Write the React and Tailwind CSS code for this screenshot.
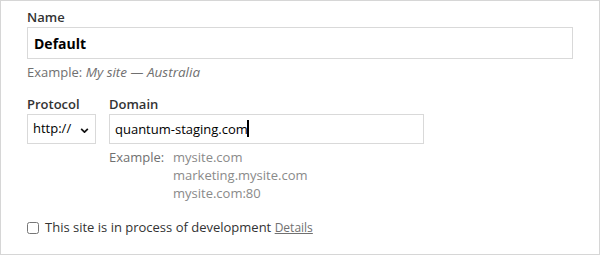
import React, { useState } from "react";

function SiteForm() {
  const [name, setName] = useState("Default");
  const [domain, setDomain] = useState("quantum-staging.com");
  const [dev, setDev] = useState(false);

  return (
    <div className="w-[600px] h-[255px] bg-white border border-[#d6d6d6] pl-[26px] pt-[6px] font-['Open_Sans',sans-serif] text-[#333]">
      {/* name */}
      <label className="block text-[13px] leading-[20px] font-semibold text-[#333]">Name</label>
      <input
        value={name}
        onChange={(e) => setName(e.target.value)}
        className="block w-[546px] h-[32px] border border-[#d9d9d9] px-[6px] text-[14px] font-bold text-black outline-none"
      />
      <p className="mt-[4px] text-[13px] leading-[18px] text-[#707070]">
        Example: <i className="text-[13.5px]">My site — Australia</i>
      </p>

      {/* protocol + domain */}
      <div className="flex gap-[13px] mt-[13px]">
        <div>
          <label className="block text-[13px] leading-[20px] font-semibold">Protocol</label>
          <div className="relative w-[69px] h-[30px] border border-[#d9d9d9] flex items-center pl-[5px] text-[13px] text-black">
            <span>http://</span>
            <svg
              viewBox="0 0 10 6"
              className="absolute right-[6px] top-[13px] w-[9px] h-[5px]"
              fill="none"
              stroke="#111"
              strokeWidth="2"
            >
              <path d="M1 1l4 4 4-4" />
            </svg>
          </div>
        </div>
        <div>
          <label className="block text-[13px] leading-[20px] font-semibold">Domain</label>
          <div className="relative">
            <input
              value={domain}
              onChange={(e) => setDomain(e.target.value)}
              className="block w-[315px] h-[30px] border border-[#d9d9d9] px-[5px] text-[13px] text-black outline-none"
            />
            {/* text caret */}
            <span className="absolute left-[138px] top-[6px] w-[2px] h-[17px] bg-black" />
          </div>
          <div className="flex mt-[4px] text-[13px] leading-[18px]">
            <span className="w-[64px] text-[#707070]">Example:</span>
            <div className="text-[#8a8a8a]">
              <div>mysite.com</div>
              <div>marketing.mysite.com</div>
              <div>mysite.com:80</div>
            </div>
          </div>
        </div>
      </div>

      {/* dev flag */}
      <label className="flex items-center gap-[6px] mt-[16px] text-[13px] text-[#333]">
        <input
          type="checkbox"
          checked={dev}
          onChange={(e) => setDev(e.target.checked)}
          className="w-[12px] h-[12px] m-0"
        />
        <span>
          This site is in process of development{" "}
          <a href="#" className="text-[12px] text-[#707070] underline">Details</a>
        </span>
      </label>
    </div>
  );
}

export default function App() {
  return <SiteForm />;
}
